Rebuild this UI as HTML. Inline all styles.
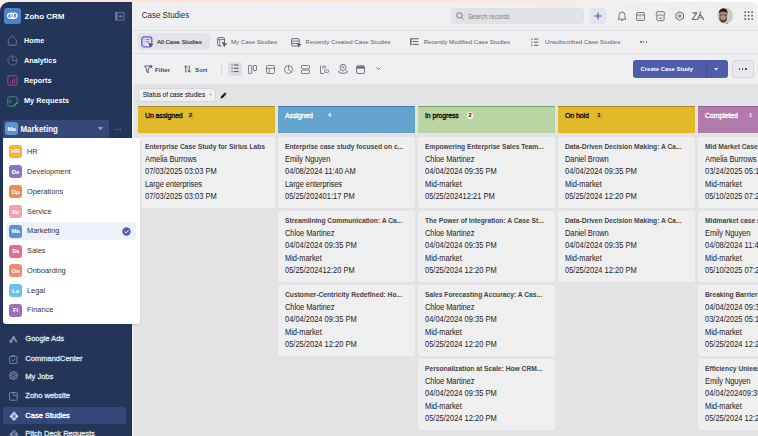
<!DOCTYPE html>
<html><head><meta charset="utf-8">
<style>
*{box-sizing:border-box;margin:0;padding:0}
html,body{width:758px;height:436px;overflow:hidden}
body{position:relative;font-family:"Liberation Sans",sans-serif;background:linear-gradient(90deg,#f7ebe5 0%,#fbe3d9 15%,#fde0d4 45%,#fbe9e3 78%,#ffffff 95%)}
.abs{position:absolute}
.t{position:absolute;white-space:nowrap;line-height:1}
svg{overflow:visible}
</style></head><body>

<div class="abs" style="left:0px;top:2px;width:132px;height:434px;background:#233558;border-top-left-radius:9px"></div>
<div class="abs" style="left:4px;top:7.5px;width:16.5px;height:16.5px;background:#4a84c9;border-radius:3px"></div>
<svg class="abs" style="left:6px;top:10px" width="13" height="12" viewBox="0 0 13 12"><ellipse cx="4.6" cy="5.8" rx="3.1" ry="2.5" transform="rotate(-20 4.6 5.8)" fill="none" stroke="#fff" stroke-width="1.3"/><ellipse cx="8" cy="5.8" rx="3.1" ry="2.5" transform="rotate(-20 8 5.8)" fill="none" stroke="#fff" stroke-width="1.3"/></svg>
<div class="t" style="left:24.5px;top:12.76px;font-size:8px;color:#fff;font-weight:bold;">Zoho CRM</div>
<svg class="abs" style="left:114.5px;top:11.8px" width="9.5" height="8.5" viewBox="0 0 9.5 8.5"><rect x="0.5" y="0.5" width="8.5" height="7.5" fill="none" stroke="#6b7aa0" stroke-width="0.9"/><rect x="0.9" y="0.9" width="1.8" height="6.7" fill="#6b7aa0"/><path d="M7.6 4.25H4.2M5.6 2.9L4.2 4.25L5.6 5.6" fill="none" stroke="#8d9bbf" stroke-width="0.9"/></svg>
<svg class="abs" style="left:7px;top:35px" width="11" height="11" viewBox="0 0 11 11"><path d="M1.3 4.6L5.3 0.9L9.3 4.6V9.2Q9.3 10.3 8.2 10.3H2.4Q1.3 10.3 1.3 9.2Z" fill="none" stroke="#6a72a6" stroke-width="1" stroke-linejoin="round"/><path d="M4.6 10.3V8.8" stroke="#6a72a6" stroke-width="0.8"/></svg>
<svg class="abs" style="left:7px;top:55px" width="11" height="11" viewBox="0 0 11 11"><circle cx="5.5" cy="5.5" r="4.6" fill="none" stroke="#6e6a9e" stroke-width="0.9"/><path d="M5.5 0.9V5.5H10.1" fill="none" stroke="#6e6a9e" stroke-width="0.9"/></svg>
<svg class="abs" style="left:7px;top:75px" width="11" height="11" viewBox="0 0 11 11"><rect x="0.8" y="0.8" width="9.4" height="9.4" rx="2" fill="none" stroke="#a9488a" stroke-width="1"/><path d="M3.6 8V6.5M5.5 8V4.8M7.4 8V3.2" stroke="#a9488a" stroke-width="0.9"/></svg>
<svg class="abs" style="left:7px;top:95.5px" width="12" height="11" viewBox="0 0 12 11"><path d="M7 10.2H2.5Q0.8 10.2 0.8 8.5V2.5Q0.8 0.8 2.5 0.8H8.5Q10.2 0.8 10.2 2.5V5" fill="none" stroke="#3d9a7c" stroke-width="0.9"/><path d="M3 3.5V6.3H5" fill="none" stroke="#3d9a7c" stroke-width="0.8"/><path d="M6.5 10.2L11 5.7" stroke="#3d9a7c" stroke-width="1.6"/></svg>
<div class="t" style="left:24px;top:36.60px;font-size:7.3px;color:#fff;font-weight:bold;;transform:scaleY(1.08);transform-origin:0 3.52px">Home</div>
<div class="t" style="left:24px;top:56.60px;font-size:7.3px;color:#fff;font-weight:bold;;transform:scaleY(1.08);transform-origin:0 3.52px">Analytics</div>
<div class="t" style="left:24px;top:76.70px;font-size:7.3px;color:#fff;font-weight:bold;;transform:scaleY(1.08);transform-origin:0 3.52px">Reports</div>
<div class="t" style="left:24px;top:97.10px;font-size:7.3px;color:#fff;font-weight:bold;;transform:scaleY(1.08);transform-origin:0 3.52px">My Requests</div>
<div class="abs" style="left:3px;top:120px;width:106px;height:18px;background:#34497a;border-radius:3px 3px 0 0"></div>
<div class="abs" style="left:5px;top:122px;width:13px;height:13px;background:#5b93cf;border-radius:3px"></div>
<div class="t" style="left:5px;top:125.92px;font-size:6.2px;color:#fff;font-weight:bold;width:13px;text-align:center;letter-spacing:-0.2px">Ma</div>
<div class="t" style="left:20.5px;top:125.61px;font-size:7.9px;color:#fff;font-weight:bold;;transform:scaleY(1.06);transform-origin:0 3.81px">Marketing</div>
<svg class="abs" style="left:98px;top:127px" width="5" height="4" viewBox="0 0 5 4"><path d="M0 0H5L2.5 3.5Z" fill="#8fa0c4"/></svg>
<div class="abs" style="left:115.0px;top:128.5px;width:1.3px;height:1.3px;background:#8e9cbd;border-radius:50%"></div>
<div class="abs" style="left:117.5px;top:128.5px;width:1.3px;height:1.3px;background:#8e9cbd;border-radius:50%"></div>
<div class="abs" style="left:120.0px;top:128.5px;width:1.3px;height:1.3px;background:#8e9cbd;border-radius:50%"></div>
<svg class="abs" style="left:8.5px;top:334.5px" width="9" height="8" viewBox="0 0 9 8"><path d="M2.2 6.2L4.6 1.6M4.6 1.6L7.3 6.6" fill="none" stroke="#8794b3" stroke-width="1.7" stroke-linecap="round"/><circle cx="1.9" cy="6.4" r="1.3" fill="none" stroke="#8794b3" stroke-width="1"/></svg>
<svg class="abs" style="left:9px;top:354.5px" width="9" height="9" viewBox="0 0 9 9"><rect x="0.6" y="1.4" width="7.4" height="7" rx="0.8" fill="none" stroke="#8794b3" stroke-width="0.85"/><path d="M3 1.4V0.6H5.6V1.4M2.6 5L3.8 6L6 4" fill="none" stroke="#8794b3" stroke-width="0.8"/></svg>
<svg class="abs" style="left:9px;top:371px" width="9" height="9" viewBox="0 0 9 9"><circle cx="4.5" cy="4.5" r="3.9" fill="none" stroke="#8794b3" stroke-width="0.9"/><circle cx="4.5" cy="4.5" r="1.6" fill="none" stroke="#8794b3" stroke-width="0.8"/><path d="M4.5 0.6L4.5 2.9M4.5 6.1V8.4M0.6 4.5H2.9M6.1 4.5H8.4M1.8 1.8L3.4 3.4M5.6 5.6L7.2 7.2M7.2 1.8L5.6 3.4M3.4 5.6L1.8 7.2" stroke="#8794b3" stroke-width="0.6"/></svg>
<svg class="abs" style="left:9px;top:391.5px" width="9" height="9" viewBox="0 0 9 9"><rect x="0.6" y="0.6" width="7.6" height="7.6" rx="0.6" fill="none" stroke="#8794b3" stroke-width="0.85"/><path d="M4.6 0.6V3.6H8.2" fill="none" stroke="#8794b3" stroke-width="0.8"/></svg>
<div class="abs" style="left:3px;top:407px;width:123px;height:17px;background:#34497b;border-radius:3px"></div>
<svg class="abs" style="left:8.5px;top:410.5px" width="10" height="11" viewBox="0 0 10 11"><path d="M5 0.8L9.2 5.3L5 9.8L0.8 5.3Z" fill="#aab6d8" stroke="#e8ecf6" stroke-width="0.7"/><circle cx="2.4" cy="5.3" r="1.3" fill="#fff" stroke="#34497b" stroke-width="0.4"/><circle cx="7.6" cy="5.3" r="1.3" fill="#fff" stroke="#34497b" stroke-width="0.4"/><circle cx="5" cy="7.9" r="1.2" fill="#fff" stroke="#34497b" stroke-width="0.4"/><circle cx="5" cy="5.3" r="0.8" fill="#1e2c50"/></svg>
<svg class="abs" style="left:8.5px;top:428.5px" width="10" height="11" viewBox="0 0 10 11"><path d="M5 0.8L9.2 5.3L5 9.8L0.8 5.3Z" fill="#5a6890" stroke="#8794b3" stroke-width="0.6"/><circle cx="2.4" cy="5.3" r="1.2" fill="#8794b3"/><circle cx="7.6" cy="5.3" r="1.2" fill="#8794b3"/><circle cx="5" cy="5.3" r="0.7" fill="#233558"/></svg>
<div class="t" style="left:25.3px;top:334.85px;font-size:7.6px;color:#dfe3ec;-webkit-text-stroke:0.3px #dfe3ec;letter-spacing:-0.05px;transform:scaleY(1.05);transform-origin:0 3.66px">Google Ads</div>
<div class="t" style="left:25.3px;top:354.95px;font-size:7.6px;color:#dfe3ec;-webkit-text-stroke:0.3px #dfe3ec;letter-spacing:-0.05px;transform:scaleY(1.05);transform-origin:0 3.66px">CommandCenter</div>
<div class="t" style="left:25.3px;top:373.15px;font-size:7.6px;color:#dfe3ec;-webkit-text-stroke:0.3px #dfe3ec;letter-spacing:-0.05px;transform:scaleY(1.05);transform-origin:0 3.66px">My Jobs</div>
<div class="t" style="left:25.3px;top:391.85px;font-size:7.6px;color:#dfe3ec;-webkit-text-stroke:0.3px #dfe3ec;letter-spacing:-0.05px;transform:scaleY(1.05);transform-origin:0 3.66px">Zoho website</div>
<div class="t" style="left:25.3px;top:411.85px;font-size:7.6px;color:#fff;-webkit-text-stroke:0.3px #fff;letter-spacing:-0.05px;transform:scaleY(1.05);transform-origin:0 3.66px">Case Studies</div>
<div class="t" style="left:25.3px;top:429.55px;font-size:7.6px;color:#dfe3ec;-webkit-text-stroke:0.3px #dfe3ec;letter-spacing:-0.05px;transform:scaleY(1.05);transform-origin:0 3.66px">Pitch Deck Requests</div>
<div class="abs" style="left:132px;top:2px;width:626px;height:434px;background:#efeff1;border-top-right-radius:5px"></div>
<div class="t" style="left:141.7px;top:11.66px;font-size:8px;color:#2b2b2d;;transform:scaleY(1.12);transform-origin:0 3.86px">Case Studies</div>
<div class="abs" style="left:132px;top:30px;width:626px;height:1px;background:#e1e1e4;"></div>
<div class="abs" style="left:132px;top:53px;width:626px;height:1px;background:#e1e1e4;"></div>
<div class="abs" style="left:451px;top:8px;width:133px;height:16px;background:#e2e2e6;border-radius:4px"></div>
<svg class="abs" style="left:456px;top:12px" width="8" height="8" viewBox="0 0 8 8"><circle cx="3.4" cy="3.4" r="2.7" fill="none" stroke="#6c6c74" stroke-width="0.9"/><path d="M5.4 5.4L7.5 7.5" stroke="#6c6c74" stroke-width="0.9"/></svg>
<div class="t" style="left:468px;top:13.97px;font-size:6.1px;color:#7d7d84;;transform:scaleY(1.1);transform-origin:0 2.94px">Search records</div>
<div class="abs" style="left:590px;top:8px;width:16px;height:16px;background:#e3e3ef;border-radius:4px"></div>
<svg class="abs" style="left:594px;top:12px" width="8" height="8" viewBox="0 0 8 8"><path d="M4 0.5V7.5M0.5 4H7.5" stroke="#4b4f9e" stroke-width="1"/></svg>
<svg class="abs" style="left:617px;top:11px" width="10" height="10" viewBox="0 0 10 10"><path d="M2 7.5V4.5Q2 1 5 1Q8 1 8 4.5V7.5L9 8.2H1Z" fill="none" stroke="#6d6d74" stroke-width="0.9" stroke-linejoin="round"/><path d="M4 9.5H6" stroke="#6d6d74" stroke-width="0.9"/></svg>
<svg class="abs" style="left:636px;top:12px" width="9" height="9" viewBox="0 0 9 9"><rect x="0.5" y="0.5" width="8" height="8" rx="1.5" fill="none" stroke="#6d6d74" stroke-width="0.9"/><path d="M0.5 3H8.5" stroke="#6d6d74" stroke-width="0.9"/><path d="M2.5 5H6.5M2.5 6.8H6.5" stroke="#6d6d74" stroke-width="0.6" stroke-dasharray="1 0.8"/></svg>
<svg class="abs" style="left:655px;top:10.6px" width="11" height="11" viewBox="0 0 11 11"><path d="M1.2 3.8V2.6Q1.2 0.7 3 0.7H8Q9.8 0.7 9.8 2.6V3.8Q8.9 4.9 7.8 3.9Q6.6 4.9 5.5 3.9Q4.4 4.9 3.2 3.9Q2.1 4.9 1.2 3.8Z" fill="none" stroke="#6d6d74" stroke-width="0.95" stroke-linejoin="round"/><path d="M1.9 4.7V8.7Q1.9 9.7 2.9 9.7H8.1Q9.1 9.7 9.1 8.7V4.7" fill="none" stroke="#6d6d74" stroke-width="0.95"/><path d="M4 7.3H7" stroke="#6d6d74" stroke-width="1"/></svg>
<svg class="abs" style="left:674.5px;top:10.8px" width="10" height="10" viewBox="0 0 10 10"><path d="M4.75 0.7L8.5 2.85V7.15L4.75 9.3L1 7.15V2.85Z" fill="none" stroke="#6d6d74" stroke-width="1" stroke-linejoin="round"/><path d="M4.75 0.7V1.8M8.5 7.15L7.6 6.6M1 7.15L1.9 6.6" stroke="#6d6d74" stroke-width="0.8"/><circle cx="4.75" cy="5" r="1.5" fill="#9a9aa0" stroke="#6d6d74" stroke-width="0.5"/></svg>
<svg class="abs" style="left:688px;top:6px" width="22" height="18" viewBox="0 0 22 18"><path d="M4.3 6.9H8.7L4.3 13.5H8.9" fill="none" stroke="#6d6d74" stroke-width="1.2" stroke-linejoin="round"/><path d="M9.6 13.5L12.2 7.6" fill="none" stroke="#6d6d74" stroke-width="1.2" stroke-linecap="round"/><path d="M12.4 8.6L15.6 13.5" fill="none" stroke="#6d6d74" stroke-width="1.2" stroke-linecap="round"/><path d="M11.2 11.6Q13.2 11.2 14.8 12.6" fill="none" stroke="#6d6d74" stroke-width="0.8"/><circle cx="12.5" cy="6.2" r="0.8" fill="#6d6d74"/></svg>
<svg class="abs" style="left:712px;top:4px" width="25" height="23" viewBox="0 0 25 23"><defs><clipPath id="av"><circle cx="13" cy="11.8" r="8"/></clipPath><radialGradient id="sk" cx="0.5" cy="0.45" r="0.6"><stop offset="0" stop-color="#c49c86"/><stop offset="1" stop-color="#8e6a58"/></radialGradient></defs><g clip-path="url(#av)"><rect width="25" height="23" fill="#d9d5cd"/><rect x="14" y="3" width="8" height="18" fill="#cfcbc2"/><ellipse cx="11.2" cy="12.6" rx="4" ry="5.8" fill="url(#sk)"/><path d="M6.8 10.5Q6.5 4.3 11.2 4.3Q15.9 4.3 15.6 10.5Q15 7.8 11.2 7.6Q7.4 7.8 6.8 10.5Z" fill="#231a16"/><path d="M7.3 13.5Q7.6 18.5 11.2 18.6Q14.8 18.5 15.1 13.5Q14 16.3 11.2 16.4Q8.4 16.3 7.3 13.5Z" fill="#4a362c"/><path d="M7.2 11H10.6M11.8 11H15.2" stroke="#2a2a2a" stroke-width="0.8"/><path d="M4 23Q5 19.5 11 20.5Q17 19.5 18 23Z" fill="#e8e6e2"/><circle cx="6.5" cy="19.6" r="0.9" fill="#222"/><circle cx="15.3" cy="19.6" r="0.9" fill="#222"/></g></svg>
<svg class="abs" style="left:744px;top:11.2px" width="10" height="10" viewBox="0 0 10 10"><rect x="0.3" y="0.3" width="1.7" height="1.7" rx="0.4" fill="#5f5f66"/><rect x="0.3" y="3.8" width="1.7" height="1.7" rx="0.4" fill="#5f5f66"/><rect x="0.3" y="7.3" width="1.7" height="1.7" rx="0.4" fill="#5f5f66"/><rect x="3.8" y="0.3" width="1.7" height="1.7" rx="0.4" fill="#5f5f66"/><rect x="3.8" y="3.8" width="1.7" height="1.7" rx="0.4" fill="#5f5f66"/><rect x="3.8" y="7.3" width="1.7" height="1.7" rx="0.4" fill="#5f5f66"/><rect x="7.3" y="0.3" width="1.7" height="1.7" rx="0.4" fill="#5f5f66"/><rect x="7.3" y="3.8" width="1.7" height="1.7" rx="0.4" fill="#5f5f66"/><rect x="7.3" y="7.3" width="1.7" height="1.7" rx="0.4" fill="#5f5f66"/></svg>
<div class="abs" style="left:136.5px;top:33.3px;width:73.5px;height:16.7px;background:#e3e2ea;border-radius:4px"></div>
<svg class="abs" style="left:141px;top:35.5px" width="13" height="12" viewBox="0 0 13 12"><rect x="0.8" y="0.8" width="10" height="10" rx="2.3" fill="#e4e0f4" stroke="#6b5cb6" stroke-width="1.3"/><path d="M3 2.8V3.6M3 5.3V6.1M3 7.8V8.6" stroke="#6b5cb6" stroke-width="1"/><path d="M4.8 3.2H8.8M4.8 5.7H8.2" stroke="#7d70c4" stroke-width="1.1"/><path d="M7.2 6.5L12.3 8.6L9.8 9.4L9 11.6Z" fill="#4e4b63"/></svg>
<div class="t" style="left:157px;top:39.17px;font-size:6.1px;color:#3e3e46;-webkit-text-stroke:0.2px #3e3e46">All Case Studies</div>
<svg class="abs" style="left:217px;top:37px" width="12" height="11" viewBox="0 0 12 11"><path d="M7.5 6V2Q7.5 0.6 6.2 0.6H1.9Q0.6 0.6 0.6 1.9V7.6Q0.6 9 1.9 9H4.5" fill="none" stroke="#5e5e66" stroke-width="0.9"/><path d="M0.6 2.6H7.5M2.8 2.6V9" stroke="#5e5e66" stroke-width="0.8"/><path d="M4.6 4.6L10.6 7.2L8.2 8L7.4 10.4Z" fill="#55555e"/></svg>
<div class="t" style="left:231px;top:39.17px;font-size:6.1px;color:#5e5e66;">My Case Studies</div>
<svg class="abs" style="left:291px;top:37.5px" width="12" height="11" viewBox="0 0 12 11"><rect x="0.6" y="0.6" width="7.6" height="7.4" rx="1.2" fill="none" stroke="#5e5e66" stroke-width="0.9"/><path d="M0.6 3.1H8.2M0.6 5.5H6" stroke="#5e5e66" stroke-width="0.8"/><path d="M5.4 4.4L11 6.8L8.7 7.6L7.9 9.8Z" fill="#55555e"/></svg>
<div class="t" style="left:305.6px;top:39.17px;font-size:6.1px;color:#5e5e66;">Recently Created Case Studies</div>
<svg class="abs" style="left:409.5px;top:37.5px" width="10" height="8" viewBox="0 0 10 8"><path d="M0.8 0.6V7.2" stroke="#5e5e66" stroke-width="1.4"/><path d="M0.5 0.8H8.8M2.5 3.6H8.2M2.5 6.4H8.8" stroke="#5e5e66" stroke-width="1"/></svg>
<div class="t" style="left:423.7px;top:39.17px;font-size:6.1px;color:#5e5e66;">Recently Modified Case Studies</div>
<svg class="abs" style="left:531px;top:37.5px" width="8" height="9" viewBox="0 0 8 9"><path d="M0.8 0.6V1.8M0.8 3.6V4.8M0.8 6.6V7.8" stroke="#5e5e66" stroke-width="1.3"/><path d="M3 1.1H7.3M3 4.2H7.3M3 7.3H7.3" stroke="#5e5e66" stroke-width="1"/></svg>
<div class="t" style="left:545px;top:39.17px;font-size:6.1px;color:#5e5e66;">Unsubscribed Case Studies</div>
<div class="abs" style="left:640.0px;top:41.2px;width:1.6px;height:1.6px;background:#6e6e76;border-radius:50%"></div>
<div class="abs" style="left:642.8px;top:41.2px;width:1.6px;height:1.6px;background:#6e6e76;border-radius:50%"></div>
<div class="abs" style="left:645.6px;top:41.2px;width:1.6px;height:1.6px;background:#6e6e76;border-radius:50%"></div>
<svg class="abs" style="left:144px;top:64.5px" width="9" height="9" viewBox="0 0 9 9"><path d="M0.5 1H6.5L4.3 4V7.8L2.7 6.8V4Z" fill="none" stroke="#55555c" stroke-width="0.9" stroke-linejoin="round"/><circle cx="7" cy="1.5" r="1.4" fill="#6558c0"/></svg>
<div class="t" style="left:155px;top:66.52px;font-size:6.2px;color:#4a4a52;font-weight:bold;">Filter</div>
<svg class="abs" style="left:184px;top:65px" width="7" height="8" viewBox="0 0 7 8"><path d="M1.8 7.5V0.8M0.3 2.3L1.8 0.8L3.3 2.3M5.2 0.5V7.2M3.7 5.7L5.2 7.2L6.7 5.7" fill="none" stroke="#4a4a52" stroke-width="0.9"/></svg>
<div class="t" style="left:195px;top:66.52px;font-size:6.2px;color:#4a4a52;font-weight:bold;">Sort</div>
<div class="abs" style="left:220.5px;top:63px;width:0.8px;height:12px;background:#d8d8dc;"></div>
<div class="abs" style="left:228px;top:61.5px;width:13.5px;height:14.5px;background:#dcdce6;border-radius:3px"></div>
<svg class="abs" style="left:231px;top:64px" width="8" height="9" viewBox="0 0 8 9"><path d="M0.5 1H1.8M3 1H7.5M0.5 4.3H1.8M3 4.3H7.5M0.5 7.6H1.8M3 7.6H7.5" stroke="#55556a" stroke-width="1"/></svg>
<svg class="abs" style="left:248px;top:64.5px" width="9" height="9" viewBox="0 0 9 9"><rect x="0.5" y="0.5" width="3.2" height="8" rx="0.5" fill="none" stroke="#66666e" stroke-width="0.8"/><rect x="5.3" y="0.5" width="3.2" height="5" rx="0.5" fill="none" stroke="#66666e" stroke-width="0.8"/></svg>
<svg class="abs" style="left:266px;top:64.5px" width="9" height="9" viewBox="0 0 9 9"><rect x="0.5" y="0.5" width="8" height="8" rx="1.3" fill="none" stroke="#66666e" stroke-width="0.8"/><path d="M0.5 3.3H8.5M3.3 3.3V8.5" stroke="#66666e" stroke-width="0.8"/></svg>
<svg class="abs" style="left:284px;top:64.5px" width="9" height="9" viewBox="0 0 9 9"><circle cx="4.5" cy="4.5" r="4" fill="none" stroke="#66666e" stroke-width="0.8"/><path d="M4.5 0.5V4.5L7.5 7" fill="none" stroke="#66666e" stroke-width="0.8"/></svg>
<svg class="abs" style="left:301px;top:64.5px" width="9" height="9" viewBox="0 0 9 9"><rect x="0.5" y="0.5" width="8" height="3.4" rx="0.8" fill="none" stroke="#66666e" stroke-width="0.8"/><rect x="0.5" y="5.1" width="8" height="3.4" rx="0.8" fill="none" stroke="#66666e" stroke-width="0.8"/></svg>
<svg class="abs" style="left:320px;top:64.5px" width="9" height="9" viewBox="0 0 9 9"><path d="M0.5 0.5V8.5H4" fill="none" stroke="#66666e" stroke-width="0.8"/><rect x="2.5" y="1" width="3" height="2" rx="0.5" fill="none" stroke="#66666e" stroke-width="0.7"/><rect x="4.5" y="5" width="4" height="2.4" rx="0.5" fill="none" stroke="#66666e" stroke-width="0.7"/></svg>
<svg class="abs" style="left:337.5px;top:64px" width="10" height="10" viewBox="0 0 10 10"><path d="M5 7.2Q2 4.8 2 3.3A3 3 0 0 1 8 3.3Q8 4.8 5 7.2Z" fill="none" stroke="#66666e" stroke-width="0.9" stroke-linejoin="round"/><circle cx="5" cy="3.3" r="0.9" fill="none" stroke="#66666e" stroke-width="0.7"/><path d="M2.6 6.2Q0.6 6.8 0.6 7.8Q0.6 9.3 5 9.3Q9.4 9.3 9.4 7.8Q9.4 6.8 7.4 6.2" fill="none" stroke="#66666e" stroke-width="0.9"/></svg>
<svg class="abs" style="left:356px;top:64.5px" width="9" height="9" viewBox="0 0 9 9"><rect x="0.5" y="0.8" width="8" height="7.7" rx="1.5" fill="none" stroke="#66666e" stroke-width="0.9"/><path d="M0.9 2.2H8.1" stroke="#66666e" stroke-width="1.8"/><path d="M0.5 3.5H8.5" stroke="#66666e" stroke-width="0.6"/></svg>
<svg class="abs" style="left:375.5px;top:66.8px" width="5" height="3" viewBox="0 0 5 3"><path d="M0.5 0.5L2.5 2.5L4.5 0.5" fill="none" stroke="#66666e" stroke-width="0.9"/></svg>
<div class="abs" style="left:633px;top:60px;width:94.5px;height:17.5px;background:#4e5da9;border-radius:3px"></div>
<div class="abs" style="left:706.3px;top:60px;width:0.7px;height:17.5px;background:#42519a;"></div>
<div class="t" style="left:640.5px;top:66.74px;font-size:5.95px;color:#ffffff;font-weight:bold;">Create Case Study</div>
<svg class="abs" style="left:714.3px;top:67.6px" width="4.4" height="2.6" viewBox="0 0 4.4 2.6"><path d="M0 0H4.4L2.2 2.6Z" fill="#e6e8f4"/></svg>
<div class="abs" style="left:732px;top:60px;width:22px;height:18px;background:#e8e8ec;border-radius:3px;border:1px solid #d4d4da"></div>
<div class="abs" style="left:738.5px;top:68.3px;width:1.7px;height:1.7px;background:#3a3a40;border-radius:50%"></div>
<div class="abs" style="left:741.8px;top:68.3px;width:1.7px;height:1.7px;background:#3a3a40;border-radius:50%"></div>
<div class="abs" style="left:745.1px;top:68.3px;width:1.7px;height:1.7px;background:#3a3a40;border-radius:50%"></div>
<div class="abs" style="left:132px;top:84px;width:626px;height:352px;background:#e3e3e6;"></div>
<div class="abs" style="left:132px;top:84px;width:1.5px;height:352px;background:#ececee;"></div>
<div class="abs" style="left:138px;top:88px;width:77.5px;height:13.5px;background:#efeff1;border-radius:3px;border:1px solid #d6d6da"></div>
<div class="t" style="left:142.8px;top:92.13px;font-size:6.6px;color:#111113;letter-spacing:-0.1px;transform:scaleY(1.14);transform-origin:0 3.18px">Status of case studies</div>
<svg class="abs" style="left:208.5px;top:94.3px" width="3" height="2" viewBox="0 0 3 2"><path d="M0 0H3L1.5 1.6Z" fill="#999"/></svg>
<svg class="abs" style="left:220px;top:91.5px" width="7" height="7" viewBox="0 0 7 7"><path d="M0.6 6.4L1 4.4L4.6 0.8Q5.1 0.4 5.6 0.9L6.1 1.4Q6.6 1.9 6.2 2.4L2.6 6Z" fill="#111"/><path d="M4 1.6L5.4 3" stroke="#e3e3e6" stroke-width="0.5"/></svg>
<div class="abs" style="left:138px;top:106px;width:137px;height:27px;background:#e3b92c;border-top:1.5px solid #a88420;border-radius:1px 1px 0 0"></div>
<div class="t" style="left:145px;top:111.54px;font-size:7.0px;color:#0a0a0a;-webkit-text-stroke:0.3px #0a0a0a;letter-spacing:-0.12px;transform:scaleY(1.08);transform-origin:0 3.37px">Un assigned</div>
<div class="abs" style="left:187.5px;top:112px;width:6.5px;height:6.5px;background:rgba(120,90,0,.12);border-radius:3px"></div>
<div class="t" style="left:189px;top:112.56px;font-size:5.5px;color:#000;font-weight:bold;">2</div>
<div class="abs" style="left:138px;top:136.7px;width:137px;height:71px;background:#efeff0;border-radius:3px"></div>
<div class="t" style="left:145px;top:144.38px;font-size:6.7px;color:#444448;font-weight:bold;;transform:scaleY(1.08);transform-origin:0 3.23px">Enterprise Case Study for Sirius Labs</div>
<div class="t" style="left:145px;top:156.00px;font-size:7.5px;color:#1c1c1e;letter-spacing:-0.08px;transform:scaleY(1.1);transform-origin:0 3.61px">Amelia Burrows</div>
<div class="t" style="left:145px;top:168.30px;font-size:7.5px;color:#1c1c1e;letter-spacing:0px;transform:scaleY(1.1);transform-origin:0 3.61px">07/03/2025 03:03 PM</div>
<div class="t" style="left:145px;top:181.20px;font-size:7.5px;color:#1c1c1e;letter-spacing:-0.08px;transform:scaleY(1.1);transform-origin:0 3.61px">Large enterprises</div>
<div class="t" style="left:145px;top:193.10px;font-size:7.5px;color:#1c1c1e;letter-spacing:0px;transform:scaleY(1.1);transform-origin:0 3.61px">07/03/2025 03:03 PM</div>
<div class="abs" style="left:278px;top:106px;width:137px;height:27px;background:#65a3cf;border-top:1.5px solid #3f76a8;border-radius:1px 1px 0 0"></div>
<div class="t" style="left:285px;top:111.54px;font-size:7.0px;color:#ffffff;-webkit-text-stroke:0.3px #ffffff;letter-spacing:-0.12px;transform:scaleY(1.08);transform-origin:0 3.37px">Assigned</div>
<div class="t" style="left:328px;top:112.56px;font-size:5.5px;color:#fff;font-weight:bold;">4</div>
<div class="abs" style="left:278px;top:136.7px;width:137px;height:71px;background:#efeff0;border-radius:3px"></div>
<div class="t" style="left:285px;top:144.38px;font-size:6.7px;color:#444448;font-weight:bold;;transform:scaleY(1.08);transform-origin:0 3.23px">Enterprise case study focused on c...</div>
<div class="t" style="left:285px;top:156.00px;font-size:7.5px;color:#1c1c1e;letter-spacing:-0.08px;transform:scaleY(1.1);transform-origin:0 3.61px">Emily Nguyen</div>
<div class="t" style="left:285px;top:168.30px;font-size:7.5px;color:#1c1c1e;letter-spacing:0px;transform:scaleY(1.1);transform-origin:0 3.61px">04/08/2024 11:40 AM</div>
<div class="t" style="left:285px;top:181.20px;font-size:7.5px;color:#1c1c1e;letter-spacing:-0.08px;transform:scaleY(1.1);transform-origin:0 3.61px">Large enterprises</div>
<div class="t" style="left:285px;top:193.10px;font-size:7.5px;color:#1c1c1e;letter-spacing:0px;transform:scaleY(1.1);transform-origin:0 3.61px">05/25/202401:17 PM</div>
<div class="abs" style="left:278px;top:210.7px;width:137px;height:71px;background:#efeff0;border-radius:3px"></div>
<div class="t" style="left:285px;top:218.38px;font-size:6.7px;color:#444448;font-weight:bold;;transform:scaleY(1.08);transform-origin:0 3.23px">Streamlining Communication: A Ca...</div>
<div class="t" style="left:285px;top:230.00px;font-size:7.5px;color:#1c1c1e;letter-spacing:-0.08px;transform:scaleY(1.1);transform-origin:0 3.61px">Chloe Martinez</div>
<div class="t" style="left:285px;top:242.30px;font-size:7.5px;color:#1c1c1e;letter-spacing:0px;transform:scaleY(1.1);transform-origin:0 3.61px">04/04/2024 09:35 PM</div>
<div class="t" style="left:285px;top:255.20px;font-size:7.5px;color:#1c1c1e;letter-spacing:-0.08px;transform:scaleY(1.1);transform-origin:0 3.61px">Mid-market</div>
<div class="t" style="left:285px;top:267.10px;font-size:7.5px;color:#1c1c1e;letter-spacing:0px;transform:scaleY(1.1);transform-origin:0 3.61px">05/25/202412:20 PM</div>
<div class="abs" style="left:278px;top:284.7px;width:137px;height:71px;background:#efeff0;border-radius:3px"></div>
<div class="t" style="left:285px;top:292.38px;font-size:6.7px;color:#444448;font-weight:bold;;transform:scaleY(1.08);transform-origin:0 3.23px">Customer-Centricity Redefined: Ho...</div>
<div class="t" style="left:285px;top:304.00px;font-size:7.5px;color:#1c1c1e;letter-spacing:-0.08px;transform:scaleY(1.1);transform-origin:0 3.61px">Chloe Martinez</div>
<div class="t" style="left:285px;top:316.30px;font-size:7.5px;color:#1c1c1e;letter-spacing:0px;transform:scaleY(1.1);transform-origin:0 3.61px">04/04/2024 09:35 PM</div>
<div class="t" style="left:285px;top:329.20px;font-size:7.5px;color:#1c1c1e;letter-spacing:-0.08px;transform:scaleY(1.1);transform-origin:0 3.61px">Mid-market</div>
<div class="t" style="left:285px;top:341.10px;font-size:7.5px;color:#1c1c1e;letter-spacing:0px;transform:scaleY(1.1);transform-origin:0 3.61px">05/25/2024 12:20 PM</div>
<div class="abs" style="left:418px;top:106px;width:137px;height:27px;background:#b8d5a3;border-top:1.5px solid #7fa46a;border-radius:1px 1px 0 0"></div>
<div class="t" style="left:425px;top:111.54px;font-size:7.0px;color:#0a0a0a;-webkit-text-stroke:0.3px #0a0a0a;letter-spacing:-0.12px;transform:scaleY(1.08);transform-origin:0 3.37px">In progress</div>
<div class="abs" style="left:466.8px;top:112px;width:6.5px;height:6.5px;background:rgba(255,255,255,.85);border-radius:50%"></div>
<div class="t" style="left:468.5px;top:112.56px;font-size:5.5px;color:#000;font-weight:bold;">2</div>
<div class="abs" style="left:418px;top:136.7px;width:137px;height:71px;background:#efeff0;border-radius:3px"></div>
<div class="t" style="left:425px;top:144.38px;font-size:6.7px;color:#444448;font-weight:bold;;transform:scaleY(1.08);transform-origin:0 3.23px">Empowering Enterprise Sales Team...</div>
<div class="t" style="left:425px;top:156.00px;font-size:7.5px;color:#1c1c1e;letter-spacing:-0.08px;transform:scaleY(1.1);transform-origin:0 3.61px">Chloe Martinez</div>
<div class="t" style="left:425px;top:168.30px;font-size:7.5px;color:#1c1c1e;letter-spacing:0px;transform:scaleY(1.1);transform-origin:0 3.61px">04/04/2024 09:35 PM</div>
<div class="t" style="left:425px;top:181.20px;font-size:7.5px;color:#1c1c1e;letter-spacing:-0.08px;transform:scaleY(1.1);transform-origin:0 3.61px">Mid-market</div>
<div class="t" style="left:425px;top:193.10px;font-size:7.5px;color:#1c1c1e;letter-spacing:0px;transform:scaleY(1.1);transform-origin:0 3.61px">05/25/202412:21 PM</div>
<div class="abs" style="left:418px;top:210.7px;width:137px;height:71px;background:#efeff0;border-radius:3px"></div>
<div class="t" style="left:425px;top:218.38px;font-size:6.7px;color:#444448;font-weight:bold;;transform:scaleY(1.08);transform-origin:0 3.23px">The Power of Integration: A Case St...</div>
<div class="t" style="left:425px;top:230.00px;font-size:7.5px;color:#1c1c1e;letter-spacing:-0.08px;transform:scaleY(1.1);transform-origin:0 3.61px">Chloe Martinez</div>
<div class="t" style="left:425px;top:242.30px;font-size:7.5px;color:#1c1c1e;letter-spacing:0px;transform:scaleY(1.1);transform-origin:0 3.61px">04/04/2024 09:35 PM</div>
<div class="t" style="left:425px;top:255.20px;font-size:7.5px;color:#1c1c1e;letter-spacing:-0.08px;transform:scaleY(1.1);transform-origin:0 3.61px">Mid-market</div>
<div class="t" style="left:425px;top:267.10px;font-size:7.5px;color:#1c1c1e;letter-spacing:0px;transform:scaleY(1.1);transform-origin:0 3.61px">05/25/2024 12:20 PM</div>
<div class="abs" style="left:418px;top:284.7px;width:137px;height:71px;background:#efeff0;border-radius:3px"></div>
<div class="t" style="left:425px;top:292.38px;font-size:6.7px;color:#444448;font-weight:bold;;transform:scaleY(1.08);transform-origin:0 3.23px">Sales Forecasting Accuracy: A Cas...</div>
<div class="t" style="left:425px;top:304.00px;font-size:7.5px;color:#1c1c1e;letter-spacing:-0.08px;transform:scaleY(1.1);transform-origin:0 3.61px">Chloe Martinez</div>
<div class="t" style="left:425px;top:316.30px;font-size:7.5px;color:#1c1c1e;letter-spacing:0px;transform:scaleY(1.1);transform-origin:0 3.61px">04/04/2024 09:35 PM</div>
<div class="t" style="left:425px;top:329.20px;font-size:7.5px;color:#1c1c1e;letter-spacing:-0.08px;transform:scaleY(1.1);transform-origin:0 3.61px">Mid-market</div>
<div class="t" style="left:425px;top:341.10px;font-size:7.5px;color:#1c1c1e;letter-spacing:0px;transform:scaleY(1.1);transform-origin:0 3.61px">05/25/2024 12:20 PM</div>
<div class="abs" style="left:418px;top:358.7px;width:137px;height:71px;background:#efeff0;border-radius:3px"></div>
<div class="t" style="left:425px;top:366.38px;font-size:6.7px;color:#444448;font-weight:bold;;transform:scaleY(1.08);transform-origin:0 3.23px">Personalization at Scale: How CRM...</div>
<div class="t" style="left:425px;top:378.00px;font-size:7.5px;color:#1c1c1e;letter-spacing:-0.08px;transform:scaleY(1.1);transform-origin:0 3.61px">Chloe Martinez</div>
<div class="t" style="left:425px;top:390.30px;font-size:7.5px;color:#1c1c1e;letter-spacing:0px;transform:scaleY(1.1);transform-origin:0 3.61px">04/04/2024 09:35 PM</div>
<div class="t" style="left:425px;top:403.20px;font-size:7.5px;color:#1c1c1e;letter-spacing:-0.08px;transform:scaleY(1.1);transform-origin:0 3.61px">Mid-market</div>
<div class="t" style="left:425px;top:415.10px;font-size:7.5px;color:#1c1c1e;letter-spacing:0px;transform:scaleY(1.1);transform-origin:0 3.61px">05/25/2024 12:20 PM</div>
<div class="abs" style="left:558px;top:106px;width:137px;height:27px;background:#e3b92c;border-top:1.5px solid #a88420;border-radius:1px 1px 0 0"></div>
<div class="t" style="left:565px;top:111.54px;font-size:7.0px;color:#0a0a0a;-webkit-text-stroke:0.3px #0a0a0a;letter-spacing:-0.12px;transform:scaleY(1.08);transform-origin:0 3.37px">On hold</div>
<div class="abs" style="left:596.0px;top:112px;width:6.5px;height:6.5px;background:rgba(120,90,0,.12);border-radius:3px"></div>
<div class="t" style="left:597.5px;top:112.56px;font-size:5.5px;color:#000;font-weight:bold;">1</div>
<div class="abs" style="left:558px;top:136.7px;width:137px;height:71px;background:#efeff0;border-radius:3px"></div>
<div class="t" style="left:565px;top:144.38px;font-size:6.7px;color:#444448;font-weight:bold;;transform:scaleY(1.08);transform-origin:0 3.23px">Data-Driven Decision Making: A Ca...</div>
<div class="t" style="left:565px;top:156.00px;font-size:7.5px;color:#1c1c1e;letter-spacing:-0.08px;transform:scaleY(1.1);transform-origin:0 3.61px">Daniel Brown</div>
<div class="t" style="left:565px;top:168.30px;font-size:7.5px;color:#1c1c1e;letter-spacing:0px;transform:scaleY(1.1);transform-origin:0 3.61px">04/04/2024 09:35 PM</div>
<div class="t" style="left:565px;top:181.20px;font-size:7.5px;color:#1c1c1e;letter-spacing:-0.08px;transform:scaleY(1.1);transform-origin:0 3.61px">Mid-market</div>
<div class="t" style="left:565px;top:193.10px;font-size:7.5px;color:#1c1c1e;letter-spacing:0px;transform:scaleY(1.1);transform-origin:0 3.61px">05/25/2024 12:20 PM</div>
<div class="abs" style="left:558px;top:210.7px;width:137px;height:71px;background:#efeff0;border-radius:3px"></div>
<div class="t" style="left:565px;top:218.38px;font-size:6.7px;color:#444448;font-weight:bold;;transform:scaleY(1.08);transform-origin:0 3.23px">Data-Driven Decision Making: A Ca...</div>
<div class="t" style="left:565px;top:230.00px;font-size:7.5px;color:#1c1c1e;letter-spacing:-0.08px;transform:scaleY(1.1);transform-origin:0 3.61px">Daniel Brown</div>
<div class="t" style="left:565px;top:242.30px;font-size:7.5px;color:#1c1c1e;letter-spacing:0px;transform:scaleY(1.1);transform-origin:0 3.61px">04/04/2024 09:35 PM</div>
<div class="t" style="left:565px;top:255.20px;font-size:7.5px;color:#1c1c1e;letter-spacing:-0.08px;transform:scaleY(1.1);transform-origin:0 3.61px">Mid-market</div>
<div class="t" style="left:565px;top:267.10px;font-size:7.5px;color:#1c1c1e;letter-spacing:0px;transform:scaleY(1.1);transform-origin:0 3.61px">05/25/2024 12:20 PM</div>
<div class="abs" style="left:698px;top:106px;width:137px;height:27px;background:#b27aab;border-top:1.5px solid #8c5a98;border-radius:1px 1px 0 0"></div>
<div class="t" style="left:705px;top:111.54px;font-size:7.0px;color:#ffffff;-webkit-text-stroke:0.3px #ffffff;letter-spacing:-0.12px;transform:scaleY(1.08);transform-origin:0 3.37px">Completed</div>
<div class="t" style="left:749px;top:112.56px;font-size:5.5px;color:#fff;font-weight:bold;">1</div>
<div class="abs" style="left:698px;top:136.7px;width:137px;height:71px;background:#efeff0;border-radius:3px"></div>
<div class="t" style="left:705px;top:144.38px;font-size:6.7px;color:#444448;font-weight:bold;;transform:scaleY(1.08);transform-origin:0 3.23px">Mid Market Case Study</div>
<div class="t" style="left:705px;top:156.00px;font-size:7.5px;color:#1c1c1e;letter-spacing:-0.08px;transform:scaleY(1.1);transform-origin:0 3.61px">Amelia Burrows</div>
<div class="t" style="left:705px;top:168.30px;font-size:7.5px;color:#1c1c1e;letter-spacing:0px;transform:scaleY(1.1);transform-origin:0 3.61px">03/24/2025 05:15 PM</div>
<div class="t" style="left:705px;top:181.20px;font-size:7.5px;color:#1c1c1e;letter-spacing:-0.08px;transform:scaleY(1.1);transform-origin:0 3.61px">Mid-market</div>
<div class="t" style="left:705px;top:193.10px;font-size:7.5px;color:#1c1c1e;letter-spacing:0px;transform:scaleY(1.1);transform-origin:0 3.61px">05/10/2025 07:20 PM</div>
<div class="abs" style="left:698px;top:210.7px;width:137px;height:71px;background:#efeff0;border-radius:3px"></div>
<div class="t" style="left:705px;top:218.38px;font-size:6.7px;color:#444448;font-weight:bold;;transform:scaleY(1.08);transform-origin:0 3.23px">Midmarket case study</div>
<div class="t" style="left:705px;top:230.00px;font-size:7.5px;color:#1c1c1e;letter-spacing:-0.08px;transform:scaleY(1.1);transform-origin:0 3.61px">Emily Nguyen</div>
<div class="t" style="left:705px;top:242.30px;font-size:7.5px;color:#1c1c1e;letter-spacing:0px;transform:scaleY(1.1);transform-origin:0 3.61px">04/08/2024 11:40 AM</div>
<div class="t" style="left:705px;top:255.20px;font-size:7.5px;color:#1c1c1e;letter-spacing:-0.08px;transform:scaleY(1.1);transform-origin:0 3.61px">Mid-market</div>
<div class="t" style="left:705px;top:267.10px;font-size:7.5px;color:#1c1c1e;letter-spacing:0px;transform:scaleY(1.1);transform-origin:0 3.61px">05/10/2025 07:20 PM</div>
<div class="abs" style="left:698px;top:284.7px;width:137px;height:71px;background:#efeff0;border-radius:3px"></div>
<div class="t" style="left:705px;top:292.38px;font-size:6.7px;color:#444448;font-weight:bold;;transform:scaleY(1.08);transform-origin:0 3.23px">Breaking Barriers: A Case</div>
<div class="t" style="left:705px;top:304.00px;font-size:7.5px;color:#1c1c1e;letter-spacing:0px;transform:scaleY(1.1);transform-origin:0 3.61px">04/04/2024 09:35 PM</div>
<div class="t" style="left:705px;top:316.30px;font-size:7.5px;color:#1c1c1e;letter-spacing:0px;transform:scaleY(1.1);transform-origin:0 3.61px">03/24/2025 05:15 PM</div>
<div class="t" style="left:705px;top:329.20px;font-size:7.5px;color:#1c1c1e;letter-spacing:-0.08px;transform:scaleY(1.1);transform-origin:0 3.61px">Mid-market</div>
<div class="t" style="left:705px;top:341.10px;font-size:7.5px;color:#1c1c1e;letter-spacing:0px;transform:scaleY(1.1);transform-origin:0 3.61px">05/25/2024 12:20 PM</div>
<div class="abs" style="left:698px;top:358.7px;width:137px;height:71px;background:#efeff0;border-radius:3px"></div>
<div class="t" style="left:705px;top:366.38px;font-size:6.7px;color:#444448;font-weight:bold;;transform:scaleY(1.08);transform-origin:0 3.23px">Efficiency Unleashed</div>
<div class="t" style="left:705px;top:378.00px;font-size:7.5px;color:#1c1c1e;letter-spacing:-0.08px;transform:scaleY(1.1);transform-origin:0 3.61px">Emily Nguyen</div>
<div class="t" style="left:705px;top:390.30px;font-size:7.5px;color:#1c1c1e;letter-spacing:0px;transform:scaleY(1.1);transform-origin:0 3.61px">04/04/202409:35 PM</div>
<div class="t" style="left:705px;top:403.20px;font-size:7.5px;color:#1c1c1e;letter-spacing:-0.08px;transform:scaleY(1.1);transform-origin:0 3.61px">Mid-market</div>
<div class="t" style="left:705px;top:415.10px;font-size:7.5px;color:#1c1c1e;letter-spacing:0px;transform:scaleY(1.1);transform-origin:0 3.61px">05/25/2024 12:20 PM</div>
<div class="abs" style="left:3px;top:138px;width:137px;height:186px;background:#ffffff;border-radius:0 0 3px 3px;box-shadow:0 1px 3px rgba(0,0,0,.15)"></div>
<div class="abs" style="left:6px;top:222px;width:130px;height:18px;background:#eef1f9;border-radius:3px"></div>
<div class="abs" style="left:9px;top:144.7px;width:13px;height:13px;background:#f6b23f;border-radius:3px"></div>
<div class="t" style="left:9px;top:148.42px;font-size:6.2px;color:#fff;font-weight:bold;width:13px;text-align:center;letter-spacing:-0.2px">HR</div>
<div class="t" style="left:27px;top:147.65px;font-size:7.4px;color:#333;">HR</div>
<div class="abs" style="left:9px;top:164.9px;width:13px;height:13px;background:#8b73c1;border-radius:3px"></div>
<div class="t" style="left:9px;top:168.62px;font-size:6.2px;color:#fff;font-weight:bold;width:13px;text-align:center;letter-spacing:-0.2px">De</div>
<div class="t" style="left:27px;top:167.85px;font-size:7.4px;color:#333;">Development</div>
<div class="abs" style="left:9px;top:185.1px;width:13px;height:13px;background:#ef8b56;border-radius:3px"></div>
<div class="t" style="left:9px;top:188.82px;font-size:6.2px;color:#fff;font-weight:bold;width:13px;text-align:center;letter-spacing:-0.2px">Op</div>
<div class="t" style="left:27px;top:188.05px;font-size:7.4px;color:#333;">Operations</div>
<div class="abs" style="left:9px;top:204.9px;width:13px;height:13px;background:#f1a2aa;border-radius:3px"></div>
<div class="t" style="left:9px;top:208.62px;font-size:6.2px;color:#fff;font-weight:bold;width:13px;text-align:center;letter-spacing:-0.2px">Se</div>
<div class="t" style="left:27px;top:207.85px;font-size:7.4px;color:#333;">Service</div>
<div class="abs" style="left:9px;top:224.5px;width:13px;height:13px;background:#5b94d0;border-radius:3px"></div>
<div class="t" style="left:9px;top:228.22px;font-size:6.2px;color:#fff;font-weight:bold;width:13px;text-align:center;letter-spacing:-0.2px">Ma</div>
<div class="t" style="left:27px;top:227.45px;font-size:7.4px;color:#333;">Marketing</div>
<div class="abs" style="left:9px;top:244.5px;width:13px;height:13px;background:#e76c8b;border-radius:3px"></div>
<div class="t" style="left:9px;top:248.22px;font-size:6.2px;color:#fff;font-weight:bold;width:13px;text-align:center;letter-spacing:-0.2px">Sa</div>
<div class="t" style="left:27px;top:247.45px;font-size:7.4px;color:#333;">Sales</div>
<div class="abs" style="left:9px;top:264.1px;width:13px;height:13px;background:#ef8c6c;border-radius:3px"></div>
<div class="t" style="left:9px;top:267.82px;font-size:6.2px;color:#fff;font-weight:bold;width:13px;text-align:center;letter-spacing:-0.2px">On</div>
<div class="t" style="left:27px;top:267.05px;font-size:7.4px;color:#333;">Onboarding</div>
<div class="abs" style="left:9px;top:283.8px;width:13px;height:13px;background:#6cc1e9;border-radius:3px"></div>
<div class="t" style="left:9px;top:287.52px;font-size:6.2px;color:#fff;font-weight:bold;width:13px;text-align:center;letter-spacing:-0.2px">Le</div>
<div class="t" style="left:27px;top:286.75px;font-size:7.4px;color:#333;">Legal</div>
<div class="abs" style="left:9px;top:303.5px;width:13px;height:13px;background:#9a71b9;border-radius:3px"></div>
<div class="t" style="left:9px;top:307.22px;font-size:6.2px;color:#fff;font-weight:bold;width:13px;text-align:center;letter-spacing:-0.2px">Fi</div>
<div class="t" style="left:27px;top:306.45px;font-size:7.4px;color:#333;">Finance</div>
<svg class="abs" style="left:122px;top:227px" width="9" height="9" viewBox="0 0 9 9"><circle cx="4.5" cy="4.5" r="4.2" fill="#5560a8"/><path d="M2.5 4.6L3.9 6L6.6 3.2" fill="none" stroke="#fff" stroke-width="0.9"/></svg>
</body></html>
